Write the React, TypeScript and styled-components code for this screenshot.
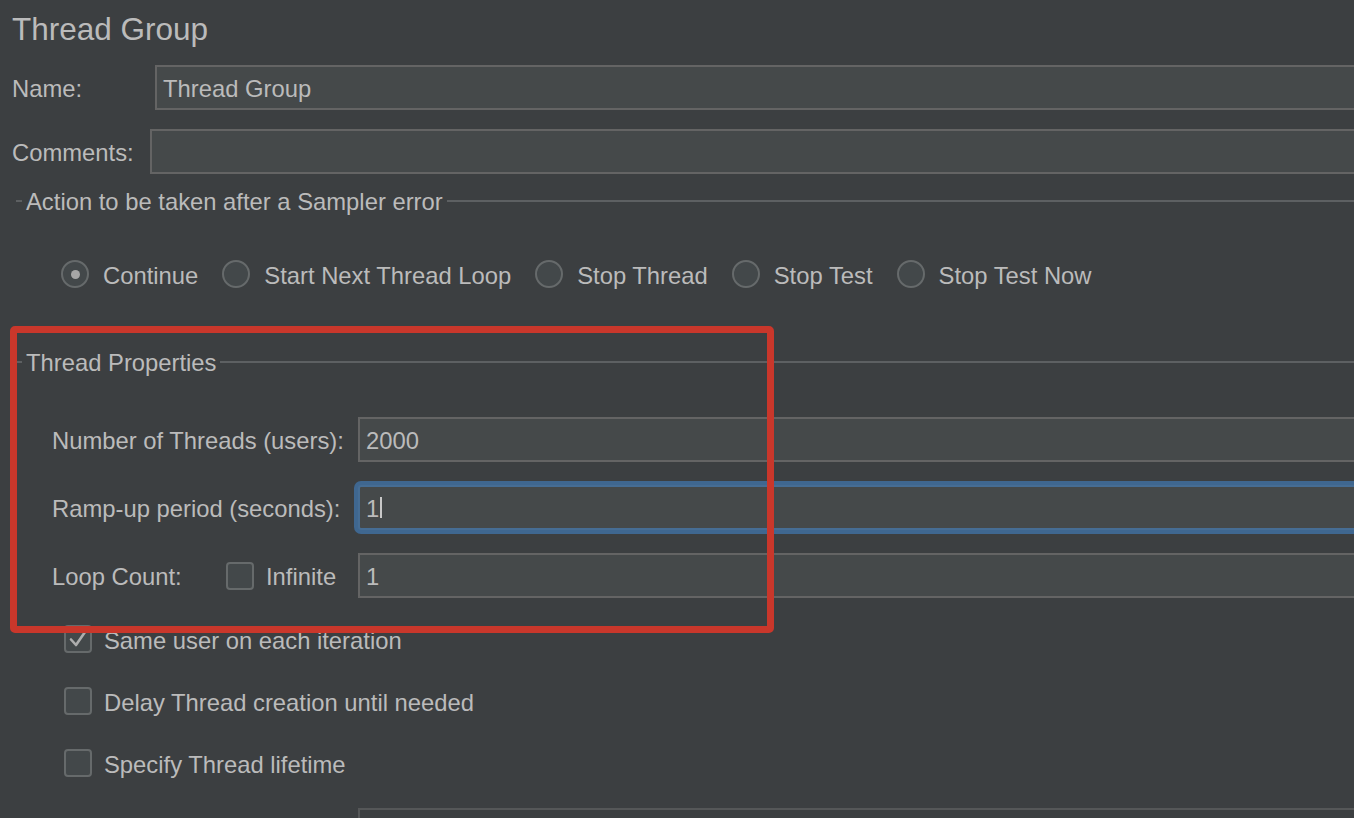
import React from "react";
import styled, { createGlobalStyle, css } from "styled-components";

const Global = createGlobalStyle`
  html, body { margin: 0; padding: 0; background: #3c3f41; }
  body { font-family: "Liberation Sans", Arial, sans-serif; }
  * { box-sizing: border-box; }
`;

const Page = styled.div`
  position: relative;
  width: 1354px;
  height: 818px;
  overflow: hidden;
  background: #3c3f41;
  color: #bbbbbb;
  padding-left: 12px;
  font-size: 23.8px;
`;

const Title = styled.div`
  height: 54px;
  line-height: 54px;
  padding-top: 2px;
  font-size: 31.5px;
  color: #bbbbbb;
  white-space: nowrap;
`;

const FormRow = styled.div<{ $mt: number; $indent?: number }>`
  display: flex;
  align-items: center;
  height: 45px;
  margin-top: ${(p) => p.$mt}px;
  padding-left: ${(p) => p.$indent ?? 0}px;
`;

const Label = styled.div<{ $w: number }>`
  width: ${(p) => p.$w}px;
  flex: none;
  white-space: nowrap;
  line-height: 42px;
  padding-top: 3px;
`;

const Field = styled.div<{ $focused?: boolean; $disabled?: boolean }>`
  flex: 1;
  height: 45px;
  margin-right: -30px;
  background: #45494a;
  border: 2px solid #646464;
  padding: 3px 0 0 6px;
  color: #bbbbbb;
  white-space: nowrap;
  display: flex;
  align-items: center;
  ${(p) =>
    p.$focused &&
    css`
      border-color: #466d94;
      box-shadow: 0 0 0 4px #3f6790;
      border-radius: 3px;
    `}
  ${(p) =>
    p.$disabled &&
    css`
      border-color: #555758;
      background: #3c3f41;
    `}
`;

const Caret = styled.span`
  display: inline-block;
  width: 2px;
  height: 21px;
  background: #c8c8c8;
  margin: -3px 0 0 1px;
`;

const SectionHeader = styled.div<{ $mt: number }>`
  display: flex;
  align-items: center;
  height: 26px;
  margin-top: ${(p) => p.$mt}px;
  margin-left: 4px;
  margin-right: -20px;
`;

const Tick = styled.span`
  width: 6px;
  height: 1.5px;
  background: #5d6062;
  flex: none;
`;

const SectionTitle = styled.span`
  padding: 2px 4px 0;
  white-space: nowrap;
`;

const Rule = styled.span`
  flex: 1;
  height: 1.5px;
  background: #5d6062;
`;

const RadioRow = styled.div`
  display: flex;
  align-items: center;
  height: 28px;
  margin-top: 46px;
  padding-left: 49px;
  gap: 24px;
`;

const RadioItem = styled.label`
  display: flex;
  align-items: center;
  gap: 14px;
  white-space: nowrap;
`;

const ItemText = styled.span`
  padding-top: 3px;
`;

const RadioCircle = styled.span<{ $checked?: boolean }>`
  width: 28px;
  height: 28px;
  border-radius: 50%;
  border: 2px solid #666a6b;
  background: #43484a;
  display: flex;
  align-items: center;
  justify-content: center;
  flex: none;
  &::after {
    content: "";
    display: ${(p) => (p.$checked ? "block" : "none")};
    width: 9px;
    height: 9px;
    border-radius: 50%;
    background: #a6a6a6;
  }
`;

const CheckRow = styled.div<{ $mt: number }>`
  display: flex;
  align-items: center;
  gap: 12px;
  height: 28px;
  margin-top: ${(p) => p.$mt}px;
  padding-left: 52px;
  white-space: nowrap;
`;

const Box = styled.span`
  width: 28px;
  height: 28px;
  border-radius: 4px;
  border: 2px solid #666a6b;
  background: #43484a;
  flex: none;
  display: flex;
  align-items: center;
  justify-content: center;
`;

const LoopLabel = styled.div`
  width: 306px;
  flex: none;
  display: flex;
  align-items: center;
  white-space: nowrap;
`;

const LoopText = styled.span`
  width: 174px;
  padding-top: 3px;
`;

const InfiniteText = styled.span`
  margin-left: 12px;
  padding-top: 3px;
`;

const Spacer = styled.div`
  width: 306px;
  flex: none;
`;

const Highlight = styled.div`
  position: absolute;
  left: 10px;
  top: 326px;
  width: 764px;
  height: 307px;
  border: 7px solid #c9372b;
  border-radius: 5px;
  pointer-events: none;
`;

const Check = () => (
  <svg width="24" height="24" viewBox="0 0 24 24">
    <polyline points="5,12.5 10,18 19,5" fill="none" stroke="#adadad" strokeWidth="2.6" strokeLinecap="round" strokeLinejoin="round" />
  </svg>
);

const Checkbox: React.FC<{ checked?: boolean }> = ({ checked }) => <Box>{checked && <Check />}</Box>;

const radios = [
  { label: "Continue", checked: true },
  { label: "Start Next Thread Loop" },
  { label: "Stop Thread" },
  { label: "Stop Test" },
  { label: "Stop Test Now" },
];

export default function App() {
  return (
    <>
      <Global />
      <Page>
        <Title>Thread Group</Title>
        <FormRow $mt={11}>
          <Label $w={143}>Name:</Label>
          <Field>Thread Group</Field>
        </FormRow>
        <FormRow $mt={19}>
          <Label $w={138}>Comments:</Label>
          <Field />
        </FormRow>

        <SectionHeader $mt={14}>
          <Tick />
          <SectionTitle>Action to be taken after a Sampler error</SectionTitle>
          <Rule />
        </SectionHeader>
        <RadioRow>
          {radios.map((r) => (
            <RadioItem key={r.label}>
              <RadioCircle $checked={r.checked} />
              <ItemText>{r.label}</ItemText>
            </RadioItem>
          ))}
        </RadioRow>

        <SectionHeader $mt={61}>
          <Tick />
          <SectionTitle>Thread Properties</SectionTitle>
          <Rule />
        </SectionHeader>
        <FormRow $mt={42} $indent={40}>
          <Label $w={306}>Number of Threads (users):</Label>
          <Field>2000</Field>
        </FormRow>
        <FormRow $mt={23} $indent={40}>
          <Label $w={306}>Ramp-up period (seconds):</Label>
          <Field $focused>
            1<Caret />
          </Field>
        </FormRow>
        <FormRow $mt={23} $indent={40}>
          <LoopLabel>
            <LoopText>Loop Count:</LoopText>
            <Checkbox />
            <InfiniteText>Infinite</InfiniteText>
          </LoopLabel>
          <Field>1</Field>
        </FormRow>

        <CheckRow $mt={27}>
          <Checkbox checked />
          <ItemText>Same user on each iteration</ItemText>
        </CheckRow>
        <CheckRow $mt={34}>
          <Checkbox />
          <ItemText>Delay Thread creation until needed</ItemText>
        </CheckRow>
        <CheckRow $mt={34}>
          <Checkbox />
          <ItemText>Specify Thread lifetime</ItemText>
        </CheckRow>
        <FormRow $mt={31} $indent={40}>
          <Spacer />
          <Field $disabled />
        </FormRow>

        <Highlight />
      </Page>
    </>
  );
}
